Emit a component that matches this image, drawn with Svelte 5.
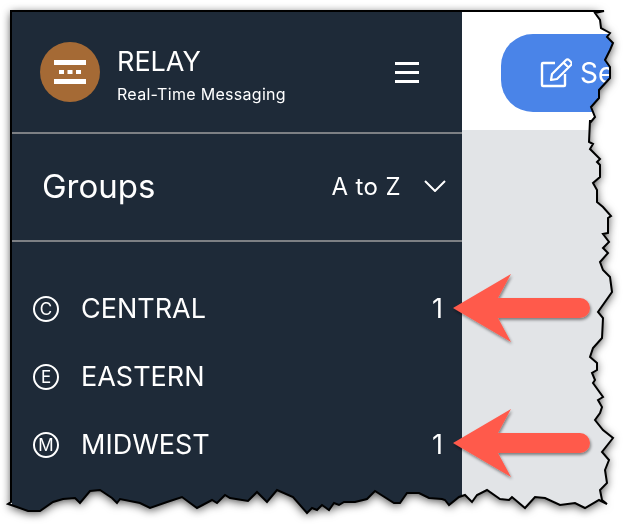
<script lang="ts">
  const groups = [
    { code: 'C', name: 'CENTRAL', count: 1 },
    { code: 'E', name: 'EASTERN', count: 0 },
    { code: 'M', name: 'MIDWEST', count: 1 }
  ];

  // torn screenshot edge, in page coordinates
  const edge =
    '11,11 604,11 595,13 600,20 601,28 610,33 607,37 613,43 610,50 605,60 610,67 610,78 599,90 599,98 591,107 595,117 590,123 ' +
    '590,120 589,142 593,144 590,149 600,159 597,162 600,165 600,177 593,183 597,190 597,202 603,207 611,216 608,218 608,233 603,234 609,242 603,248 608,253 600,262 ' +
    '603,270 610,277 612,292 598,312 603,318 602,338 593,348 590,357 597,363 597,370 592,373 595,380 593,383 603,397 598,400 602,407 600,413 595,420 603,430 613,438 ' +
    '602,452 609,460 605,470 607,483 600,490 602,500 607,504 599,500 585,508 575,503 560,505 545,498 535,497 525,508 512,497 509,500 500,499 487,490 477,495 472,502 465,495 459,497 449,505 445,500 442,499 429,498 419,493 407,493 400,503 394,503 375,491 367,499 355,502 344,502 339,505 334,503 329,510 322,505 317,510 ' +
    '312,508 307,513 293,497 277,490 267,502 257,492 248,501 230,498 225,495 217,503 212,500 197,508 182,497 167,502 150,508 140,503 120,499 117,503 112,498 100,490 90,491 80,503 75,498 63,499 53,502 40,511 28,511 17,507 8,504 11,502';

  const clip = `polygon(${edge
    .split(' ')
    .map((p) => p.split(',').map((n) => n + 'px').join(' '))
    .join(', ')})`;

  const arrows = [308, 443];
</script>

<div class="page">
  <div class="shadow">
    <div class="shot" style="clip-path: {clip}">
      <aside class="sidebar">
        <header class="brand">
          <div class="logo">
            <svg viewBox="0 0 60 60" width="60" height="60" aria-hidden="true">
              <rect x="14" y="18" width="32" height="5" fill="#fff" />
              <rect x="19" y="28" width="5" height="4" fill="#fff" />
              <rect x="27.5" y="28" width="5" height="4" fill="#fff" />
              <rect x="36" y="28" width="5" height="4" fill="#fff" />
              <rect x="14" y="37" width="32" height="5" fill="#fff" />
            </svg>
          </div>
          <div class="brand-text">
            <div class="brand-name">RELAY</div>
            <div class="brand-sub">Real-Time Messaging</div>
          </div>
          <div class="burger"><span></span><span></span><span></span></div>
        </header>

        <div class="groups-head">
          <h2>Groups</h2>
          <div class="sort">
            <span>A to Z</span>
            <svg viewBox="0 0 22 12" width="22" height="12" aria-hidden="true">
              <path d="M1 1 L11 11 L21 1" fill="none" stroke="#fff" stroke-width="2" />
            </svg>
          </div>
        </div>

        <ul class="groups">
          {#each groups as g}
            <li>
              <span class="badge">{g.code}</span>
              <span class="name">{g.name}</span>
              {#if g.count}<span class="count">{g.count}</span>{/if}
            </li>
          {/each}
        </ul>
      </aside>

      <main class="content">
        <div class="toolbar">
          <button class="send">
            <svg viewBox="0 0 32 32" width="32" height="32" aria-hidden="true">
              <path d="M15 6 H3 a1 1 0 0 0 -1 1 V28 a1 1 0 0 0 1 1 H24 a1 1 0 0 0 1 -1 V17" fill="none" stroke="#fff" stroke-width="2.4" />
              <path d="M11 23 L12 17 L26 3 a2 2 0 0 1 3 0 L31 5 a2 2 0 0 1 0 3 L17 22 Z M23.5 5.5 L28.5 10.5" fill="none" stroke="#fff" stroke-width="2.2" stroke-linejoin="round" />
            </svg>
            <span>Send</span>
          </button>
        </div>
      </main>
    </div>
  </div>

  <svg class="overlay" viewBox="0 0 624 524" width="624" height="524" aria-hidden="true">
    <polygon points={edge} fill="none" stroke="#000" stroke-width="2" />
    <defs>
      <filter id="arrow-shadow" x="-10%" y="-20%" width="120%" height="150%">
        <feDropShadow dx="1" dy="2" stdDeviation="1.5" flood-color="#000" flood-opacity="0.45" />
      </filter>
    </defs>
    {#each arrows as y}
      <path
        d="M453 {y} L511 {y - 34} L498 {y - 10} H580 a10 10 0 0 1 0 20 H498 L511 {y + 34} Z"
        fill="#ff5a4c"
        filter="url(#arrow-shadow)"
      />
    {/each}
  </svg>
</div>

<style>
  :global(body) {
    margin: 0;
    background: #fff;
  }

  .page {
    position: relative;
    width: 624px;
    height: 524px;
    overflow: hidden;
    font-family: Inter, 'Liberation Sans', sans-serif;
    color: #fff;
  }

  .shadow {
    filter: drop-shadow(0 2px 5px rgba(0, 0, 0, 0.75));
  }

  .shot {
    display: flex;
    box-sizing: border-box;
    width: 624px;
    height: 524px;
    padding: 12px 0 0 12px;
    background: #e2e4e7;
  }

  .overlay {
    position: absolute;
    top: 0;
    left: 0;
  }

  .sidebar {
    width: 450px;
    flex-shrink: 0;
    background: #1e2a38;
  }

  .brand {
    display: flex;
    align-items: center;
    box-sizing: border-box;
    height: 122px;
    padding: 0 43px 0 28px;
    border-bottom: 2px solid #7d8084;
  }

  .logo {
    display: flex;
    width: 60px;
    height: 60px;
    border-radius: 50%;
    background: #a56a35;
  }

  .brand-text {
    flex: 1;
    margin-left: 17px;
    padding-top: 5px;
  }

  .brand-name {
    font-size: 27px;
    line-height: 33px;
  }

  .brand-sub {
    margin-top: 6px;
    font-size: 16px;
    line-height: 20px;
    letter-spacing: 0.3px;
  }

  .burger {
    display: flex;
    flex-direction: column;
    gap: 6px;
    width: 24px;
  }

  .burger span {
    height: 3px;
    background: #fff;
  }

  .groups-head {
    display: flex;
    align-items: center;
    justify-content: space-between;
    box-sizing: border-box;
    height: 108px;
    padding: 0 16px 2px 30px;
    border-bottom: 2px solid #7d8084;
  }

  h2 {
    margin: 0;
    font-size: 33px;
    font-weight: 400;
  }

  .sort {
    display: flex;
    align-items: center;
    gap: 23px;
    font-size: 24px;
    letter-spacing: 0.4px;
  }

  .groups {
    margin: 0;
    padding: 33px 0 0;
    list-style: none;
  }

  li {
    display: flex;
    align-items: center;
    height: 68px;
    padding: 0 19px 0 21px;
  }

  .badge {
    display: flex;
    align-items: center;
    justify-content: center;
    box-sizing: border-box;
    width: 26px;
    height: 26px;
    border: 2px solid #fff;
    border-radius: 50%;
    font-size: 17px;
  }

  .name {
    flex: 1;
    margin-left: 22px;
    padding-bottom: 2px;
    font-size: 27px;
  }

  .count {
    padding-bottom: 2px;
    font-size: 27px;
  }

  .content {
    flex: 1;
    min-width: 0;
  }

  .toolbar {
    box-sizing: border-box;
    height: 118px;
    padding: 22px 0 0 39px;
    background: #fff;
  }

  .send {
    display: flex;
    align-items: center;
    gap: 8px;
    width: 200px;
    height: 78px;
    padding: 0 0 0 39px;
    border: 0;
    border-radius: 32px;
    background: #4a84e8;
    color: #fff;
    font-family: inherit;
    font-size: 28px;
  }
</style>
